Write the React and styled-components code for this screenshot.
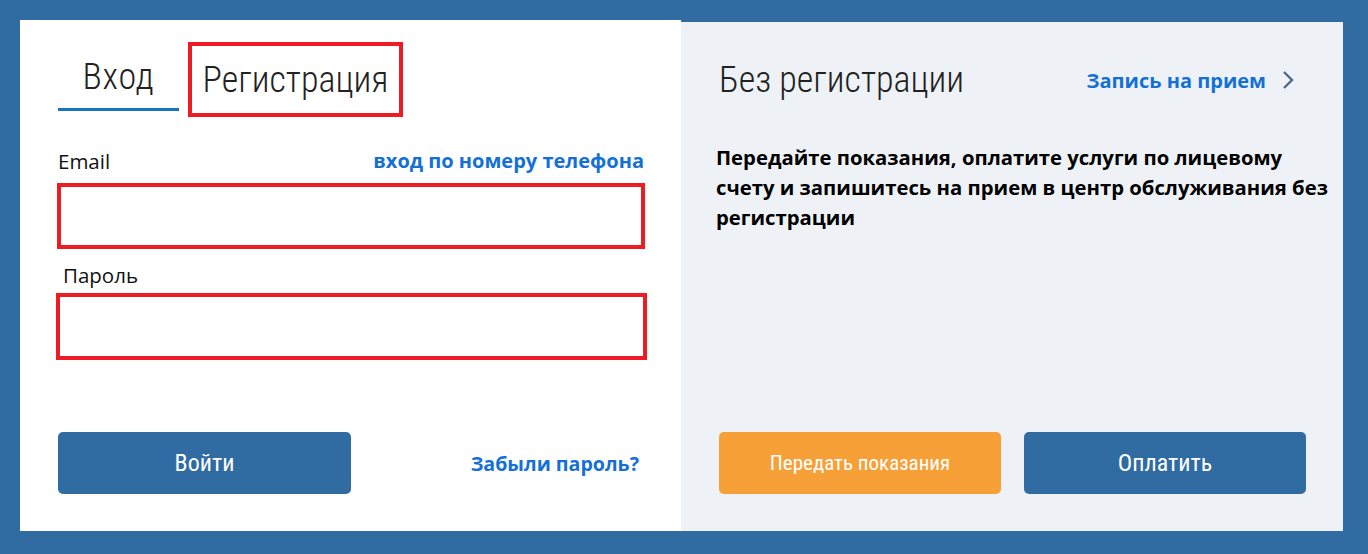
import React from "react";
import styled, { createGlobalStyle } from "styled-components";

const Global = createGlobalStyle`
  html, body { margin: 0; padding: 0; background: #306ba1; }
  body { font-family: "Open Sans", "Noto Sans", sans-serif; }
  * { box-sizing: border-box; }
`;

const Frame = styled.div`
  width: 1368px;
  height: 554px;
  padding: 20px 25px 23px 20px;
  background: #306ba1;
`;

const Card = styled.div`
  display: grid;
  grid-template-columns: 661px 662px;
  height: 100%;
`;

const LeftPane = styled.section`
  background: #ffffff;
  padding: 22px 37px 37px 38px;
  display: flex;
  flex-direction: column;
`;

const RightPane = styled.section`
  background: #eef2f6;
  margin-top: 2px;
  padding: 40px 37px 37px 38px;
  display: flex;
  flex-direction: column;
`;

const Tabs = styled.div`
  display: flex;
  align-items: flex-end;
  gap: 9px;
`;

const condensed = `
  font-family: "Roboto Condensed", "Liberation Sans Narrow", "DejaVu Sans Condensed", sans-serif;
  font-stretch: condensed;
`;

const Tab = styled.div`
  ${condensed}
  font-size: 36px;
  font-weight: 300;
  color: #222;
  line-height: 1;
  letter-spacing: ${(p) => (p.$active ? "0.8px" : "0")};
  width: ${(p) => p.$w}px;
  text-align: center;
  padding-bottom: ${(p) => (p.$active ? 13 : 0)}px;
  border-bottom: ${(p) => (p.$active ? "3px solid #1a73c2" : "none")};
  margin-bottom: ${(p) => (p.$active ? 6 : 0)}px;
`;

const Highlight = styled.div`
  border: 4px solid #ed1c24;
  height: 75px;
  display: flex;
  align-items: center;
  justify-content: center;
`;

const FieldHead = styled.div`
  display: flex;
  justify-content: space-between;
  align-items: center;
  margin-top: ${(p) => p.$top}px;
  padding-left: ${(p) => p.$indent}px;
  height: 28px;
  line-height: 28px;
`;

const Label = styled.span`
  font-family: "Open Sans", sans-serif;
  font-size: 20.5px;
  color: #111;
`;

const Link = styled.a`
  font-family: "Open Sans", sans-serif;
  font-weight: 700;
  font-size: ${(p) => p.$fs || 20}px;
  color: #1470d6;
  text-decoration: none;
  cursor: pointer;
  display: inline-flex;
  align-items: center;
  gap: 16px;
  margin-right: ${(p) => p.$mr || 0}px;
`;

const Input = styled.input`
  display: block;
  height: ${(p) => p.$h}px;
  width: ${(p) => p.$w}px;
  margin: ${(p) => p.$top}px 0 0 ${(p) => p.$shift}px;
  border: 4px solid #ed1c24;
  background: #fff;
  outline: none;
  font-size: 18px;
  padding: 0 12px;
`;

const Actions = styled.div`
  margin-top: auto;
  display: flex;
  align-items: center;
  justify-content: ${(p) => p.$justify || "flex-start"};
  gap: 23px;
`;

const Button = styled.button`
  ${condensed}
  width: ${(p) => p.$w}px;
  height: 62px;
  border: none;
  border-radius: 5px;
  background: ${(p) => (p.$orange ? "#f6a037" : "#306ba1")};
  color: #fff;
  font-size: ${(p) => p.$fs}px;
  font-weight: 400;
  cursor: pointer;
`;

const Header = styled.div`
  display: flex;
  align-items: center;
  justify-content: space-between;
  padding-right: 12px;
`;

const Title = styled.h2`
  ${condensed}
  margin: 0;
  font-size: 36px;
  font-weight: 300;
  color: #222;
  line-height: 1;
`;

const Text = styled.p`
  margin: 44px -30px 0 -3px;
  white-space: nowrap;
  font-family: "Open Sans", sans-serif;
  font-weight: 700;
  font-size: 20.3px;
  line-height: 30px;
  color: #000;
`;

const Chevron = () => (
  <svg width="12" height="20" viewBox="0 0 12 20" fill="none">
    <path d="M2 2 L10 10 L2 18" stroke="#4a6a8c" strokeWidth="2.4" />
  </svg>
);

export default function App() {
  return (
    <>
      <Global />
      <Frame>
        <Card>
          <LeftPane>
            <Tabs>
              <Tab $active $w={121}>Вход</Tab>
              <Highlight>
                <Tab $w={207}>Регистрация</Tab>
              </Highlight>
            </Tabs>
            <FieldHead $top={30} $indent={0}>
              <Label>Email</Label>
              <Link>вход по номеру телефона</Link>
            </FieldHead>
            <Input $top={8} $h={66} $w={588} $shift={-1} />
            <FieldHead $top={12} $indent={5}>
              <Label>Пароль</Label>
            </FieldHead>
            <Input $top={4} $h={67} $w={591} $shift={-2} />
            <Actions $justify="space-between">
              <Button $w={293} $fs={24}>Войти</Button>
              <Link $fs={19.6} $mr={5}>Забыли пароль?</Link>
            </Actions>
          </LeftPane>
          <RightPane>
            <Header>
              <Title>Без регистрации</Title>
              <Link>
                Запись на прием <Chevron />
              </Link>
            </Header>
            <Text>
              Передайте показания, оплатите услуги по лицевому
              <br />
              счету и запишитесь на прием в центр обслуживания без
              <br />
              регистрации
            </Text>
            <Actions>
              <Button $orange $w={282} $fs={21}>Передать показания</Button>
              <Button $w={282} $fs={24}>Оплатить</Button>
            </Actions>
          </RightPane>
        </Card>
      </Frame>
    </>
  );
}
